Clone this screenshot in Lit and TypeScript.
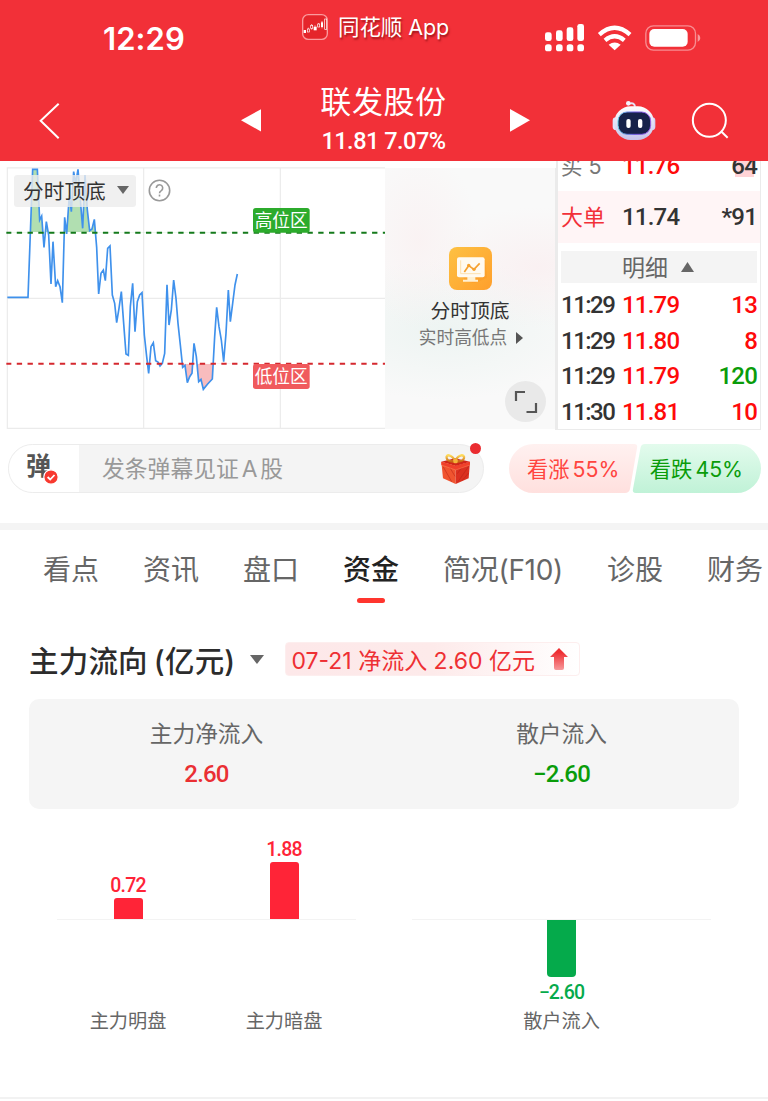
import { LitElement, html, svg, css } from "lit";
import { customElement } from "lit/decorators.js";
import { classMap } from "lit/directives/class-map.js";

const shared = css`
  :host { display: block; box-sizing: border-box; }
  * { box-sizing: border-box; }
  svg { display: block; flex: none; }
  .num { font-family: Roboto, "Noto Sans CJK SC", sans-serif; font-weight: 500; }
`;

const SERIES: number[][] = [
  [22,412],[84,412],[98,28],[112,28],[119,180],[125,168],[132,262],[139,185],[146,225],[153,372],[159,245],
  [167,380],[173,362],[180,380],[187,428],[194,172],[200,222],[208,105],[214,155],[221,35],[227,70],[234,28],
  [241,120],[248,205],[255,45],[262,150],[269,212],[276,207],[283,178],[290,262],[296,402],[303,340],[310,330],
  [316,362],[323,265],[330,258],[337,405],[344,430],[350,488],[357,445],[364,395],[371,490],[378,582],[385,586],
  [391,440],[398,370],[405,515],[412,425],[419,405],[426,398],[433,525],[440,590],[446,640],[453,560],[460,548],
  [467,602],[474,606],[480,618],[487,610],[494,580],[501,374],[507,495],[514,450],[521,360],[528,415],[534,490],
  [541,555],[548,622],[555,616],[562,668],[569,650],[576,640],[582,550],[589,590],[596,665],[603,658],[610,688],
  [623,672],[637,657],[644,530],[650,442],[657,500],[664,540],[671,605],[678,520],[685,390],[691,485],[698,430],
  [705,375],[712,342],
];
const LINE = SERIES.map((p) => p.join(",")).join(" ");

@customElement("stock-header")
class StockHeader extends LitElement {
  static styles = [shared, css`
    :host { background: #f23038; color: #fff; height: 161px; }
    .status { display: grid; grid-template-columns: 302px 243px 1fr; height: 78px; align-items: start; }
    .time { font-size: 31px; font-weight: 600; line-height: 40px; padding: 19px 0 0 103px; letter-spacing: 0.1px; }
    .app { display: flex; align-items: center; gap: 10px; height: 28px; margin-top: 13px; font-size: 21.5px; line-height: 28px;
      white-space: nowrap; text-shadow: 1px 2px 2px rgba(90,0,0,.55); }
    .app span { letter-spacing: -.1px; }
    .radio { margin-top: 24px; }
    .nav { display: grid; grid-template-columns: 241px 20px 245px 24px 81px 78px 1fr; height: 83px; align-items: start; }
    .nav > svg { margin-top: 20px; }
    .title { text-align: center; }
    .name { font-size: 31px; line-height: 40px; margin-top: 4px; letter-spacing: .6px; }
    .quote { font-size: 23.500px; line-height: 28px; margin-top: 5px; letter-spacing: -.5px; }
  `];
  render() {
    return html`
      <div class="status">
        <div class="time">12:29</div>
        <div class="app">
          <svg width="26" height="26" viewBox="0 0 78 78">
            <rect x="2" y="2" width="74" height="74" rx="17" fill="#e5252b" stroke="#fb9a9d" stroke-width="4"/>
            <g fill="#fff"><rect x="5" y="48" width="7" height="9"/><rect x="35" y="38" width="9" height="11"/><rect x="57" y="25" width="6" height="14"/></g>
            <g fill="none" stroke="#fff" stroke-width="2"><rect x="16" y="45" width="6" height="9"/><rect x="26" y="34" width="6" height="9"/><rect x="47" y="30" width="6" height="9"/><rect x="68" y="15" width="6" height="31"/><path d="M19 41v4M29 30v4M29 43v4M39 34v4M50 27v3M60 21v22"/></g>
          </svg>
          <span>同花顺 App</span>
        </div>
        <svg class="radio" width="156" height="28" viewBox="483 72 468 84" fill="#fff">
          <rect x="483" y="97" width="20" height="26" rx="7"/><rect x="516" y="91" width="20" height="32" rx="7"/>
          <rect x="548" y="82" width="20" height="41" rx="7"/><rect x="580" y="72" width="20" height="51" rx="7"/>
          <rect x="483" y="133" width="20" height="21" rx="8"/><rect x="516" y="133" width="20" height="21" rx="8"/>
          <rect x="548" y="133" width="20" height="21" rx="8"/><rect x="580" y="133" width="20" height="21" rx="8"/>
          <path d="M646 104Q692 63 738 104M663 121Q692 97 721 121" fill="none" stroke="#fff" stroke-width="13"/>
          <path d="M674 134Q692 121 710 134L692 151z"/>
          <rect x="785.500" y="77.500" width="149" height="73" rx="23" fill="none" stroke="#fff" stroke-opacity=".45" stroke-width="4"/>
          <rect x="796" y="87" width="115" height="53" rx="15"/>
          <path d="M941 102q8 4 8 12t-8 12z" fill-opacity=".5"/>
        </svg>
      </div>
      <div class="nav">
        <svg width="80" height="42" viewBox="0 294 240 126"><path d="M176 311L122 362.500L176 415" fill="none" stroke="#fff" stroke-width="6"/></svg>
        <svg width="20" height="42" viewBox="722 294 60 126"><path d="M722 361L783 327V395z" fill="#fff"/></svg>
        <div class="title">
          <div class="name">联发股份</div>
          <div class="quote num">11.81 7.07%</div>
        </div>
        <svg width="24" height="42" viewBox="368 294 72 126"><path d="M440 361L380 327V395z" fill="#fff"/></svg>
        <i></i>
        <svg width="48" height="42" viewBox="680 292 144 126">
          <defs>
            <linearGradient id="shell" x2="0" y2="1"><stop stop-color="#fff"/><stop offset="1" stop-color="#c5c3ea"/></linearGradient>
            <linearGradient id="rim"><stop stop-color="#66cfe8"/><stop offset=".5" stop-color="#6b55e0"/><stop offset="1" stop-color="#a064e8"/></linearGradient>
          </defs>
          <path d="M735 309Q750 304 752 318" fill="none" stroke="#e4e3f6" stroke-width="6"/>
          <circle cx="732" cy="308" r="7" fill="#f4f3fd"/>
          <rect x="685" y="350" width="24" height="38" rx="10" fill="#dfe3fb"/><rect x="789" y="350" width="24" height="38" rx="10" fill="#d6d3f3"/>
          <rect x="690" y="317" width="119" height="101" rx="49" fill="url(#shell)"/>
          <rect x="701" y="334" width="98" height="67" rx="27" fill="#17224a" stroke="url(#rim)" stroke-width="3"/>
          <rect x="726" y="355" width="13" height="27" rx="6" fill="#fff"/><rect x="761" y="355" width="13" height="27" rx="6" fill="#fff"/>
        </svg>
        <svg width="44" height="42" viewBox="915 294 132 126" fill="none" stroke="#fff" stroke-width="6"><circle cx="976" cy="361" r="49.500"/><path d="M1011 394L1031 413"/></svg>
      </div>`;
  }
}

@customElement("intraday-chart")
class IntradayChart extends LitElement {
  static styles = [shared, css`
    :host { display: flex; position: relative; width: 556px; height: 272px; overflow: hidden; }
    .picker { position: absolute; left: 14px; top: 14px; width: 122px; height: 32px; border-radius: 3px; background: rgba(236,236,236,.8);
      display: flex; align-items: center; gap: 11px; padding: 0 0 2px 9px; font-size: 20.700px; color: #333; white-space: nowrap; }
    .help { position: absolute; left: 148px; top: 18px; }
    .promo { width: 170px; height: 261px; margin-top: 7px; display: flex; flex-direction: column; align-items: center;
      padding-top: 79px; background:
      radial-gradient(ellipse 60px 90px at 20% 28%, rgba(250,236,237,.5), rgba(249,249,249,0)),
      radial-gradient(ellipse 110px 60px at 90% 38%, rgba(250,235,237,.6), rgba(249,249,249,0)),
      radial-gradient(ellipse 150px 70px at 35% 62%, rgba(232,242,239,.7), rgba(249,249,249,0)), #f9f9f9; }
    .name { font-size: 19.800px; line-height: 26px; margin-top: 8px; color: #333; }
    .sub { font-size: 17.700px; line-height: 24px; margin-top: 2px; color: #777; display: flex; align-items: center; gap: 9px; white-space: nowrap; margin-left: 2px; }
    .expand { position: absolute; left: 505px; top: 220px; }
    .edge { width: 1px; height: 262px; margin-top: 7px; background: #ebebeb; }
    .zone { font-size: 53px; fill: #fff; }
  `];
  render() {
    return html`
      <svg width="385" height="272" viewBox="0 3 1155 816">
        <defs>
          <clipPath id="above"><rect x="22" y="26" width="1133" height="191"/></clipPath>
          <clipPath id="below"><rect x="520" y="611" width="635" height="190"/></clipPath>
        </defs>
        <path d="M1155 23.500H22V805H1155M431 24V805M841 24V805M22 415H1155" fill="none" stroke="#ebebeb" stroke-width="3.500"/>
        <polygon points="${LINE} 712,217 22,217" fill="#b1dfb1" clip-path="url(#above)"/>
        <polygon points="${LINE} 712,611 22,611" fill="#f8bcbe" clip-path="url(#below)"/>
        <polyline points="${LINE}" fill="none" stroke="#3f91ec" stroke-width="5"/>
        ${svg`<path d="M19 218H1155" stroke="#147a1b" stroke-width="6" stroke-dasharray="16 16.300" stroke-dashoffset="1"/>
        <path d="M19 611.500H1155" stroke="#d5282f" stroke-width="6" stroke-dasharray="16 16.300" stroke-dashoffset="1"/>`}
        <rect x="759" y="144" width="170" height="74" rx="8" fill="#2cab2c"/>
        <rect x="759" y="612" width="170" height="75" rx="8" fill="#f05a5d"/>
        <text class="zone" x="764" y="202">高位区</text>
        <text class="zone" x="764" y="669">低位区</text>
      </svg>
      <div class="promo">
        <svg width="43" height="43" viewBox="0 0 129 129">
          <defs><linearGradient id="gold" x2="1" y2="1"><stop stop-color="#fdc143"/><stop offset="1" stop-color="#ff9f2c"/></linearGradient></defs>
          <rect width="129" height="129" rx="24" fill="url(#gold)"/>
          <path d="M30 38l78-6 6 60-36 16H70L46 101z" fill="#f99120" opacity=".3"/>
          <rect x="24" y="31" width="83" height="60" rx="6" fill="#fffaf0"/><path d="M55 90h24v8h8v6H42v-6h13z" fill="#fff1d3"/>
          <path d="M35 40v40h60" fill="none" stroke="#fde0af" stroke-width="3"/>
          <path d="M46 75L59 56L75 67L92 49" fill="none" stroke="#f6a12e" stroke-width="5"/><circle cx="59" cy="55" r="5" fill="#f6a12e"/><circle cx="75" cy="67" r="5" fill="#f6a12e"/>
        </svg>
        <div class="name">分时顶底</div>
        <div class="sub">实时高低点 <svg width="7" height="12" viewBox="0 0 7 12"><path d="M0 0L7 6L0 12z" fill="#555"/></svg></div>
      </div>
      <div class="edge"></div>
      <div class="picker">分时顶底 <svg width="12" height="8" viewBox="0 0 12 8"><path d="M0 0H12L6 8z" fill="#666"/></svg></div>
      <svg class="help" width="23" height="23" viewBox="0 0 23 23" fill="none" stroke="#999" stroke-width="1.600">
        <circle cx="11.500" cy="11.500" r="10.200"/><path d="M8.300 9a3.200 3.200 0 1 1 5 2.600Q11.500 12.700 11.500 14.300"/><path d="M11.500 15.600v1.900"/>
      </svg>
      <svg class="expand" width="41" height="41" viewBox="0 0 41 41"><circle cx="20.500" cy="20.500" r="20.500" fill="#e9e9e9"/><path d="M11 20V11H20M31 22V31H21.500" fill="none" stroke="#555" stroke-width="2.200"/></svg>`;
  }
}

@customElement("order-book")
class OrderBook extends LitElement {
  static styles = [shared, css`
    :host { width: 205px; height: 269px; overflow: hidden; border: solid #ebebeb; border-width: 0 1px 1px 2px; }
    .row { display: grid; grid-template-columns: 61px 1fr auto; align-items: center; padding: 1px 3px 0 3px; font-size: 24px; height: 35.700px;
      line-height: 35px; color: #333; letter-spacing: -.8px; white-space: nowrap; }
    .clock { letter-spacing: -1.500px; }
    .cn { font-family: Inter, "Noto Sans CJK SC", sans-serif; font-size: 22px; font-weight: 400; letter-spacing: 0; }
    .bid { height: 30px; margin-top: -12px; padding-top: 0; color: #333; }
    .bid .cn { color: #777; font-size: 21.500px; }
    .big { height: 52px; margin-top: 12px; background: #fff5f6; }
    .big .cn { color: #f23038; }
    .up { color: #ff0a0a; } .down { color: #0a9c0a; }
    .mark { background: linear-gradient(#ffd3d6, #ffd3d6) 4px 6px / 19px 22px no-repeat; }
    .detail { display: flex; align-items: center; justify-content: center; gap: 13px; height: 32px; margin: 8px 3px 4px 3px; padding: 0 2px 2px 0; background: #f4f4f4;
      font-size: 23px; color: #666; }
    .detail svg { margin-top: 1px; }
  `];
  rows = [["11:29", "11.79", "13", 1], ["11:29", "11.80", "8", 1], ["11:29", "11.79", "120", 0], ["11:30", "11.81", "10", 1]] as [string, string, string, number][];
  render() {
    return html`
      <div class="row num bid"><span class="cn">买 5</span><span class="up">11.76</span><span class="mark">64</span></div>
      <div class="row num big"><span class="cn">大单</span><span>11.74</span><span>*91</span></div>
      <div class="detail">明细 <svg width="13" height="10" viewBox="0 0 13 10"><path d="M0 10L6.500 0L13 10z" fill="#666"/></svg></div>
      ${this.rows.map(([t, p, v, up]) => html`
        <div class="row num"><span class="clock">${t}</span><span class="up">${p}</span><span class=${classMap({ up: !!up, down: !up })}>${v}</span></div>`)}`;
  }
}

@customElement("comment-bar")
class CommentBar extends LitElement {
  static styles = [shared, css`
    :host { display: flex; height: 97px; padding: 11px 7px 0 8px; border-bottom: 7px solid #f4f4f4; }
    .entry { position: relative; display: flex; align-items: center; width: 476px; height: 49px; border: 1px solid #ececec; border-radius: 25px; background: #f4f4f4; }
    .toggle { position: relative; width: 70px; height: 47px; border-radius: 24px 0 0 24px; background: #fff; padding-left: 17px; color: #555; font-size: 25px; font-weight: 700; line-height: 43px; }
    .check { position: absolute; left: 34px; top: 24px; }
    .hint { flex: 1; padding: 0 0 2px 23px; font-size: 22.800px; color: #999; white-space: nowrap; word-spacing: -3.500px; }
    .gift { margin-right: 12px; }
    .dot { position: absolute; left: 461px; top: -2px; width: 11px; height: 11px; border-radius: 50%; background: #ea2c30; }
    .votes { margin-left: 25px; display: grid; width: 252px; height: 49px; }
    .votes > * { grid-area: 1 / 1; }
    .vote { display: flex; align-items: center; justify-content: space-between; padding: 0 18px 2px 18px; font-size: 21.300px; white-space: nowrap; color: #ff453f; word-spacing: -3px; }
    .vote .fall { color: #0a9c0a; }
  `];
  render() {
    return html`
      <div class="entry">
        <div class="toggle">弹
          <svg class="check" width="16" height="16" viewBox="0 0 16 16"><circle cx="8" cy="8" r="7.200" fill="#f8392f" stroke="#fff" stroke-width="1.200"/><path d="M4.600 8L7.200 10.500L11.500 6" fill="none" stroke="#fff" stroke-width="1.800"/></svg>
        </div>
        <div class="hint">发条弹幕见证 A 股</div>
        <svg class="gift" width="31" height="32" viewBox="0 0 93 96">
          <defs><linearGradient id="bow" x2="0" y2="1"><stop stop-color="#ffdc5c"/><stop offset="1" stop-color="#c96a16"/></linearGradient></defs>
          <path d="M4 26L45 16L90 26L47 39z" fill="#cf2619"/>
          <path d="M4 26L47 38V93L9 76z" fill="#f0542f"/><path d="M90 26L47 38V93L86 76z" fill="#db3020"/>
          <path d="M10 42L35 86M25 36L45 70M86 40L54 86M70 37L52 62M86 60L66 83" stroke="#b92218" stroke-width="3" opacity=".5"/>
          <path d="M4 26L47 39L90 26V36L47 51L4 36z" fill="#f0402a"/><path d="M4 36L47 51L90 36" fill="none" stroke="#fb8a5b" stroke-width="1.500"/>
          <path d="M46 25C34 1 17 4 20 15S37 26 46 25C55 1 75 4 72 15S55 26 46 25z" fill="none" stroke="url(#bow)" stroke-width="7"/>
          <rect x="40" y="17" width="13" height="14" rx="5" fill="#f4b33a"/>
        </svg>
        <i class="dot"></i>
      </div>
      <div class="votes">
        <svg width="252" height="49" viewBox="0 0 252 49">
          <defs>
            <linearGradient id="rise" x2="0" y2="1"><stop stop-color="#fff1f0"/><stop offset="1" stop-color="#ffe0de"/></linearGradient>
            <linearGradient id="drop" x2="0" y2="1"><stop stop-color="#e3fbed"/><stop offset="1" stop-color="#c0f2d7"/></linearGradient>
          </defs>
          <path d="M24.500 0H125Q129 0 128 4L121 45Q120 49 116 49H24.500A24.500 24.500 0 0 1 24.500 0z" fill="url(#rise)"/>
          <path d="M136 0H227.500A24.500 24.500 0 0 1 227.500 49H127Q123 49 124 45L131.500 4Q132 0 136 0z" fill="url(#drop)"/>
        </svg>
        <div class="vote"><span>看涨 55%</span><span class="fall">看跌 45%</span></div>
      </div>`;
  }
}

@customElement("fund-flow")
class FundFlow extends LitElement {
  static styles = [shared, css`
    .tabs { display: flex; gap: 44px; padding: 20px 0 0 43px; height: 89px; overflow: hidden; font-size: 28px; line-height: 40px; color: #666; white-space: nowrap; }
    .tab { display: flex; flex-direction: column; align-items: center; flex: none; }
    .mixed { letter-spacing: -.3px; }
    .on { color: #222; font-weight: 500; }
    .on::after { content: ""; width: 28px; height: 5px; margin-top: 8px; border-radius: 3px; background: #ff352e; }
    .head { display: flex; align-items: center; height: 34px; margin-top: 23px; padding-left: 29px; }
    .title { font-size: 29.500px; font-weight: 500; color: #2c2c2c; white-space: nowrap; letter-spacing: .2px; word-spacing: -2px; padding-bottom: 1px; }
    .caret { margin: 0 21px 0 15px; }
    .tag { display: flex; align-items: center; justify-content: space-between; width: 295px; height: 34px; padding: 0 11px 1px 5px; border: 1px solid #fdeeee; border-radius: 4px;
      background: linear-gradient(90deg, #fde8e9, #fdeaea 50%, #fff); color: #ee2f33; font-size: 23px; white-space: nowrap; }
    .card { display: grid; grid-template-columns: 1fr 1fr; margin: 23px 29px 0; height: 110px; border-radius: 10px; background: #f5f5f5; text-align: center; padding-top: 20px; }
    .label { font-size: 22.700px; line-height: 30px; color: #666; }
    .value { font-size: 24px; line-height: 28px; margin-top: 11px; color: #ea2f33; letter-spacing: -.8px; }
    .value.green { color: #0a9c0a; }
    .plots { display: grid; grid-template-columns: 299px 299px; gap: 56px; padding-left: 57px; height: 290px; border-bottom: 2px solid #f2f2f2; }
    .left { background: linear-gradient(#f3f3f3, #f3f3f3) 0 110px / 100% 1px no-repeat; display: grid; grid-template-columns: 142px 170px; }
    .right { background: linear-gradient(#f3f3f3, #f3f3f3) 0 110px / 100% 1px no-repeat; display: grid; }
    .col { display: grid; grid-template-rows: 110px 90px 24px; justify-items: center; }
    .part { display: flex; flex-direction: column; align-items: center; }
    .pos { justify-content: flex-end; }
    .bar { width: 29px; background: #ff2437; border-radius: 3px 3px 0 0; }
    .bar.neg { background: #05aa4b; border-radius: 0 0 4px 4px; margin-top: 1px; }
    .fig { font-size: 19.500px; line-height: 24px; color: #ff2437; letter-spacing: -.8px; }
    .fig.green { color: #05aa4b; margin-top: 4px; }
    .axis { font-size: 19.200px; line-height: 24px; color: #666; }
  `];
  tabs = ["看点", "资讯", "盘口", "资金", "简况(F10)", "诊股", "财务"];
  bars = [["0.72", "主力明盘", 21], ["1.88", "主力暗盘", 57]] as [string, string, number][];
  render() {
    return html`
      <div class="tabs">${this.tabs.map((t) => html`<div class=${classMap({ tab: true, on: t === "资金", mixed: t.length > 2 })}>${t}</div>`)}</div>
      <div class="head">
        <div class="title">主力流向 (亿元)</div>
        <svg class="caret" width="14" height="9" viewBox="0 0 14 9"><path d="M0 0H14L7 9z" fill="#666"/></svg>
        <div class="tag"><span>07-21 净流入 2.60 亿元</span>
          <svg width="18" height="22" viewBox="0 0 18 22"><defs><linearGradient id="arrow" x2="0" y2="1"><stop offset=".2" stop-color="#ee2f33"/><stop offset="1" stop-color="#f79a9c"/></linearGradient></defs><path d="M9 0L18 9H14V20Q14 22 12 22H6Q4 22 4 20V9H0z" fill="url(#arrow)"/></svg>
        </div>
      </div>
      <div class="card">
        <div><div class="label">主力净流入</div><div class="value num">2.60</div></div>
        <div><div class="label">散户流入</div><div class="value green num">−2.60</div></div>
      </div>
      <div class="plots">
        <div class="left">${this.bars.map(([v, n, h]) => html`
          <div class="col">
            <div class="part pos"><span class="fig num">${v}</span><div class="bar" style="height:${h}px"></div></div>
            <div></div>
            <div class="axis">${n}</div>
          </div>`)}</div>
        <div class="right">
          <div class="col">
            <div></div>
            <div class="part"><div class="bar neg" style="height:57px"></div><span class="fig green num">−2.60</span></div>
            <div class="axis">散户流入</div>
          </div>
        </div>
      </div>`;
  }
}

@customElement("app-root")
class AppRoot extends LitElement {
  static styles = [shared, css`
    :host { width: 768px; height: 1101px; overflow: hidden; background: #fff; font-family: Inter, "Noto Sans CJK SC", sans-serif; }
    .market { display: flex; height: 272px; }
  `];
  render() {
    return html`
      <stock-header></stock-header>
      <div class="market"><intraday-chart></intraday-chart><order-book></order-book></div>
      <comment-bar></comment-bar>
      <fund-flow></fund-flow>`;
  }
}
